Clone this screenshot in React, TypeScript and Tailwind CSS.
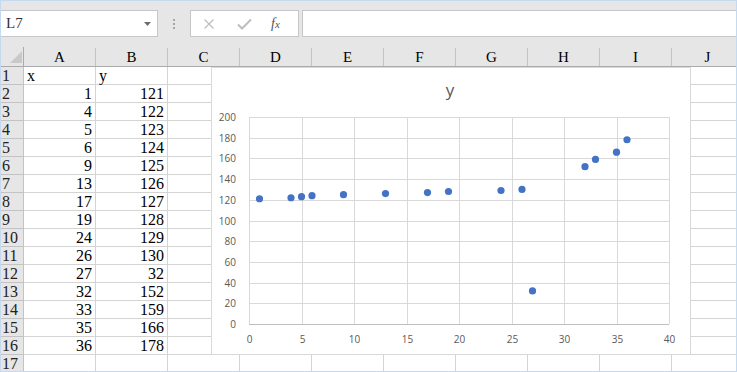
import React from 'react';

const columns = ['A', 'B', 'C', 'D', 'E', 'F', 'G', 'H', 'I', 'J'];

const data: [number, number][] = [
  [1, 121], [4, 122], [5, 123], [6, 124], [9, 125], [13, 126], [17, 127], [19, 128],
  [24, 129], [26, 130], [27, 32], [32, 152], [33, 159], [35, 166], [36, 178],
];

const cellFont = { fontFamily: '"Liberation Serif", "DejaVu Serif", serif' };

// plot area inside the chart svg
const X0 = 37;
const X1 = 457;
const Y0 = 49;
const Y1 = 256;
const px = (v: number) => X0 + (v / 40) * (X1 - X0);
const py = (v: number) => Y1 - (v / 200) * (Y1 - Y0);

const ScatterChart: React.FC = () => (
  <div className="absolute left-[210px] top-[20px] w-[480px] h-[288px] bg-white border border-[#d9d9d9]">
    <svg width="478" height="286" className="block" style={{ fontFamily: '"Open Sans", "Liberation Sans", sans-serif' }}>
      <text x="238" y="28" textAnchor="middle" fontSize="17" fill="#595959">y</text>
      {[0, 20, 40, 60, 80, 100, 120, 140, 160, 180, 200].map(v => (
        <g key={v}>
          <line x1={X0} x2={X1} y1={Math.round(py(v)) + 0.5} y2={Math.round(py(v)) + 0.5} stroke={v === 0 ? '#bfbfbf' : '#d9d9d9'} />
          <text x="24" y={Math.round(py(v)) + 4} textAnchor="end" fontSize="10" fill="#595959">{v}</text>
        </g>
      ))}
      {[0, 5, 10, 15, 20, 25, 30, 35, 40].map(v => (
        <g key={v}>
          <line x1={Math.round(px(v)) + 0.5} x2={Math.round(px(v)) + 0.5} y1={Y0} y2={Y1} stroke="#d9d9d9" />
          <text x={Math.round(px(v)) + 0.5} y="275" textAnchor="middle" fontSize="10" fill="#595959">{v}</text>
        </g>
      ))}
      <line x1={X0} x2={X1} y1={Math.round(py(0)) + 0.5} y2={Math.round(py(0)) + 0.5} stroke="#bfbfbf" />
      {data.map(([x, y]) => (
        <circle key={x} cx={px(x)} cy={py(y)} r="3.6" fill="#4472c4" />
      ))}
    </svg>
  </div>
);

const FormulaBar: React.FC = () => (
  <div className="h-[46px] flex items-start pt-[9px]">
    <div className="w-[157px] h-[27px] bg-white border-y border-r border-[#c6c6c6] flex items-center justify-between pl-[5px] pr-[5px]">
      <span className="text-[15px] text-[#333]" style={cellFont}>L7</span>
      <svg width="8" height="4" viewBox="0 0 8 4"><path d="M0 0h7l-3.5 4z" fill="#6d6d6d" /></svg>
    </div>
    <div className="w-[32px] h-[27px] flex flex-col items-center justify-center gap-[2px]">
      <span className="w-[2px] h-[2px] bg-[#a6a6a6]" />
      <span className="w-[2px] h-[2px] bg-[#a6a6a6]" />
      <span className="w-[2px] h-[2px] bg-[#a6a6a6]" />
    </div>
    <div className="w-[109px] h-[27px] bg-white border border-[#c6c6c6] flex items-center">
      <svg width="12" height="12" viewBox="0 0 12 12" className="ml-[12px]">
        <path d="M1.5 1.5l9 9M10.5 1.5l-9 9" stroke="#bdbdbd" strokeWidth="1.2" fill="none" />
      </svg>
      <svg width="15" height="12" viewBox="0 0 15 12" className="ml-[22px]">
        <path d="M1 6.5l4 4L14 1.5" stroke="#bdbdbd" strokeWidth="2" fill="none" />
      </svg>
      <span className="ml-[19px] text-[14px] italic text-[#555] leading-none" style={{ fontFamily: '"Liberation Serif", serif' }}>
        f<span className="text-[11px]">x</span>
      </span>
    </div>
    <div className="flex-1 ml-[3px] h-[27px] bg-white border-y border-l border-[#c6c6c6]" />
  </div>
);

const App: React.FC = () => {
  const rows = Array.from({ length: 17 }, (_, i) => i + 1);
  return (
    <div className="w-[737px] h-[372px] overflow-hidden bg-[#e6e6e6] border border-[#c5d9f1]">
      <FormulaBar />
      <div className="relative">
        <div className="flex h-[20px] border-b border-[#ababab]" style={cellFont}>
          <div className="w-[23px] shrink-0 border-r border-[#ababab] relative">
            <svg width="12" height="12" className="absolute left-[9px] top-[4px]"><path d="M12 0V12H0z" fill="#c9c9c9" /></svg>
          </div>
          {columns.map(c => (
            <div key={c} className="w-[72px] shrink-0 border-r border-[#c3c3c3] mt-[1px] flex items-center justify-center text-[15px] text-black">
              {c}
            </div>
          ))}
        </div>
        {rows.map(r => {
          const point = r >= 2 && r <= 16 ? data[r - 2] : null;
          return (
            <div key={r} className="flex h-[18px]" style={cellFont}>
              <div className="w-[23px] shrink-0 bg-[#e6e6e6] border-r border-b border-[#c3c3c3] pl-[1px] text-[16px] leading-[18px] text-[#222]">
                {r}
              </div>
              {columns.map((c, ci) => {
                let content: React.ReactNode = null;
                let align = 'justify-end';
                if (r === 1 && ci === 0) { content = 'x'; align = 'justify-start'; }
                if (r === 1 && ci === 1) { content = 'y'; align = 'justify-start'; }
                if (point && ci === 0) content = point[0];
                if (point && ci === 1) content = point[1];
                return (
                  <div key={c} className={`w-[72px] shrink-0 bg-white border-r border-b border-[#d4d4d4] flex items-end pb-[1px] px-[3px] text-[16px] leading-[15px] text-black ${align}`}>
                    {content}
                  </div>
                );
              })}
            </div>
          );
        })}
        <ScatterChart />
      </div>
    </div>
  );
};

export default App;
